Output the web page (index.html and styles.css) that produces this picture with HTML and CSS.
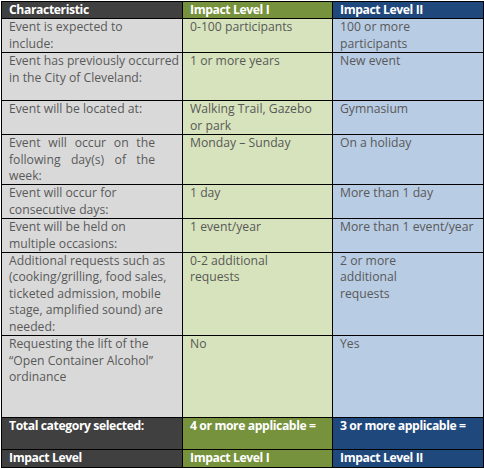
FILE: index.html
```html
<!DOCTYPE html>
<html lang="en">
<head>
<meta charset="utf-8">
<title>Impact Level</title>
<link rel="stylesheet" href="styles.css">
</head>
<body>
<table class="grid">
  <colgroup>
    <col class="c1">
    <col class="c2">
    <col class="c3">
  </colgroup>
  <tr class="head h17">
    <td class="k-dark">Characteristic</td>
    <td class="k-green">Impact Level I</td>
    <td class="k-blue">Impact Level II</td>
  </tr>
  <tr class="h33">
    <td class="b-grey">Event is expected to<br>include:</td>
    <td class="b-green">0-100 participants</td>
    <td class="b-blue">100 or more<br>participants</td>
  </tr>
  <tr class="h49">
    <td class="b-grey">Event has previously occurred<br>in the City of Cleveland:</td>
    <td class="b-green">1 or more years</td>
    <td class="b-blue">New event</td>
  </tr>
  <tr class="h35">
    <td class="b-grey">Event will be located at:</td>
    <td class="b-green">Walking Trail, Gazebo<br>or park</td>
    <td class="b-blue">Gymnasium</td>
  </tr>
  <tr class="h49">
    <td class="b-grey"><div class="just">Event will occur on the</div><div class="just">following day(s) of the</div><div>week:</div></td>
    <td class="b-green">Monday – Sunday</td>
    <td class="b-blue">On a holiday</td>
  </tr>
  <tr class="h34">
    <td class="b-grey">Event will occur for<br>consecutive days:</td>
    <td class="b-green">1 day</td>
    <td class="b-blue">More than 1 day</td>
  </tr>
  <tr class="h33">
    <td class="b-grey">Event will be held on<br>multiple occasions:</td>
    <td class="b-green">1 event/year</td>
    <td class="b-blue">More than 1 event/year</td>
  </tr>
  <tr class="h82">
    <td class="b-grey">Additional requests such as<br>(cooking/grilling, food sales,<br>ticketed admission, mobile<br>stage, amplified sound) are<br>needed:</td>
    <td class="b-green">0-2 additional<br>requests</td>
    <td class="b-blue">2 or more<br>additional<br>requests</td>
  </tr>
  <tr class="h83">
    <td class="b-grey">Requesting the lift of the<br>“Open Container Alcohol”<br>ordinance</td>
    <td class="b-green">No</td>
    <td class="b-blue">Yes</td>
  </tr>
  <tr class="head h33">
    <td class="k-dark">Total category selected:</td>
    <td class="k-green">4 or more applicable =</td>
    <td class="k-blue">3 or more applicable =</td>
  </tr>
  <tr class="head h17">
    <td class="k-dark">Impact Level</td>
    <td class="k-green">Impact Level I</td>
    <td class="k-blue">Impact Level II</td>
  </tr>
</table>
</body>
</html>
```

FILE: styles.css
```css
html, body {
  margin: 0;
  padding: 0;
  background: #ffffff;
}

body {
  padding: 1px 0 0 1px;
  font-family: "Open Sans", "Liberation Sans", sans-serif;
  font-size: 12.2px;
  line-height: 16.4px;
  color: #595959;
}

.grid {
  border-collapse: collapse;
  table-layout: fixed;
  width: 482px;
}

.c1 { width: 181px; }
.c2 { width: 150px; }
.c3 { width: 151px; }

.grid td {
  border: 1px solid #000000;
  padding: 0 5px 0 7px;
  vertical-align: top;
  white-space: nowrap;
  overflow: hidden;
}

.h17 { height: 16px; }
.h33 { height: 32px; }
.h34 { height: 33px; }
.h35 { height: 34px; }
.h49 { height: 48px; }
.h82 { height: 81px; }
.h83 { height: 82px; }

.head td {
  color: #ffffff;
  font-weight: bold;
  letter-spacing: -0.4px;
}

.k-dark { background: #404040; }
.k-green { background: #76923c; }
.k-blue { background: #1f497d; }

.b-grey { background: #d9d9d9; }
.b-green { background: #d7e3bc; }
.b-blue { background: #b8cce4; }

.just {
  width: 146px;
  text-align: justify;
  text-align-last: justify;
  white-space: normal;
}
```
